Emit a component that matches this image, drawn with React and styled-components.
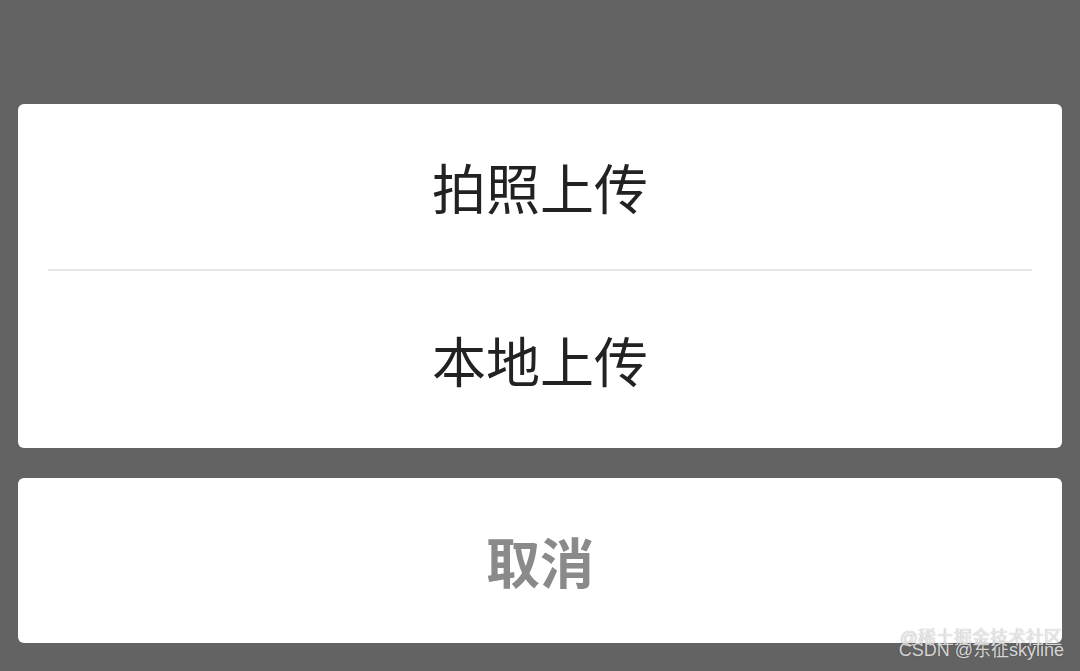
import React from "react";
import styled, { createGlobalStyle } from "styled-components";

const Global = createGlobalStyle`
  html, body { margin: 0; padding: 0; }
  body {
    background: #636363;
    font-family: "Noto Sans CJK SC", "Noto Sans", sans-serif;
  }
`;

const Page = styled.div`
  position: relative;
  width: 1080px;
  height: 671px;
  box-sizing: border-box;
  padding: 104px 18px 0;
  display: flex;
  flex-direction: column;
  gap: 30px;
  overflow: hidden;
`;

const Card = styled.div`
  background: #ffffff;
  border-radius: 6px;
  display: flex;
  flex-direction: column;
  overflow: hidden;
`;

const Option = styled.div`
  height: ${(p) => p.$h}px;
  display: flex;
  align-items: center;
  justify-content: center;
  font-size: 54px;
  color: ${(p) => (p.$muted ? "#8a8a8a" : "#222222")};
  font-weight: ${(p) => (p.$muted ? 700 : 400)};
  line-height: 1;
`;

const Divider = styled.div`
  height: 2px;
  margin: 0 30px;
  background: #e6e6e6;
`;

const Watermark = styled.div`
  position: absolute;
  right: ${(p) => p.$r}px;
  top: ${(p) => p.$t}px;
  font-family: "Liberation Sans", "Noto Sans CJK SC", sans-serif;
  font-size: 18px;
  line-height: 1;
  color: rgba(255, 255, 255, 0.8);
  text-shadow: 0 0 1px rgba(0, 0, 0, 0.45);
  white-space: nowrap;
`;

export default function App() {
  return (
    <>
      <Global />
      <Page>
        <Card>
          <Option $h={165}>拍照上传</Option>
          <Divider />
          <Option $h={177}>本地上传</Option>
        </Card>
        <Card>
          <Option $h={165} $muted>取消</Option>
        </Card>
        <Watermark $r={18} $t={629}>@稀土掘金技术社区</Watermark>
        <Watermark $r={16} $t={641}>CSDN @东征skyline</Watermark>
      </Page>
    </>
  );
}
